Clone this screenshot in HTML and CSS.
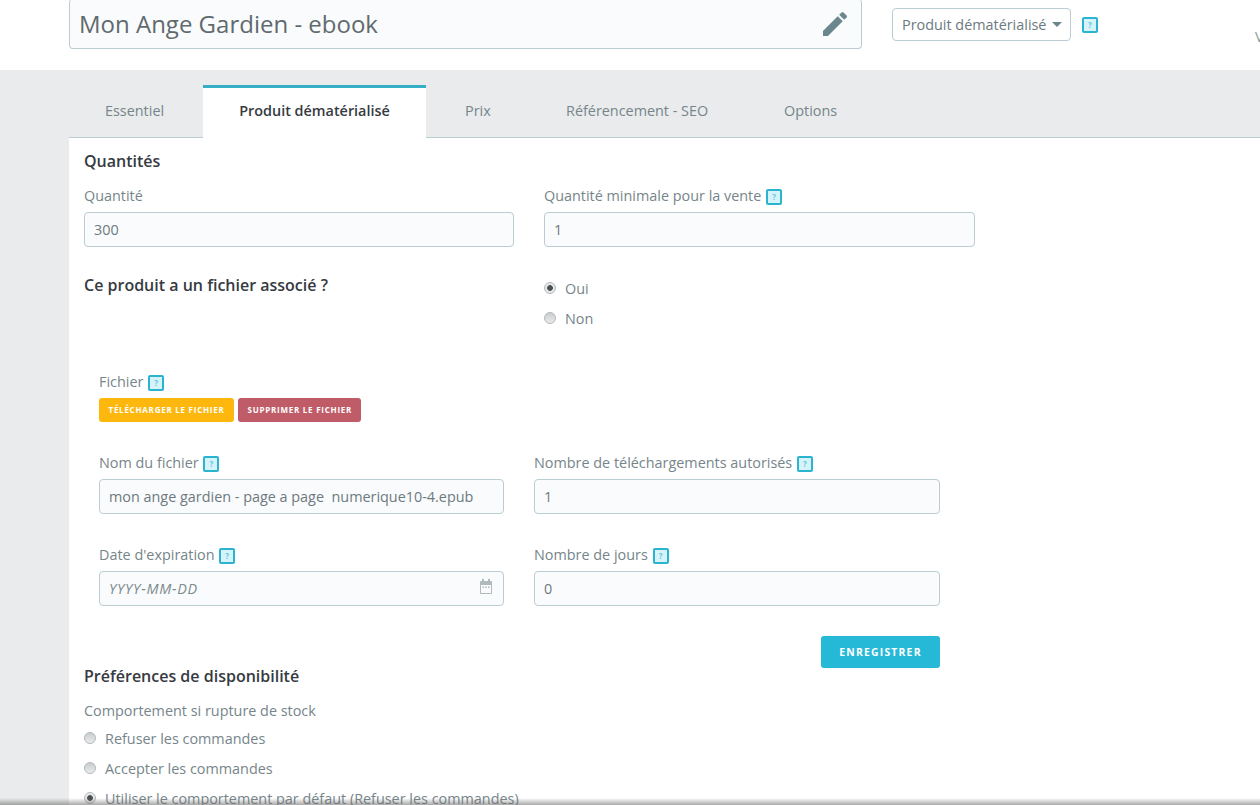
FILE: index.html
```html
<!DOCTYPE html>
<html lang="fr">
<head>
<meta charset="utf-8">
<title>Mon Ange Gardien - ebook</title>
<link rel="stylesheet" href="styles.css">
</head>
<body>
<header class="top">
  <div class="title-box">
    <span class="title-text">Mon Ange Gardien - ebook</span>
    <svg class="pencil" viewBox="0 0 24 24" width="32" height="32"><path d="M3 17.25V21h3.75L17.81 9.94l-3.75-3.75L3 17.25zM20.71 7.04a1 1 0 0 0 0-1.41l-2.34-2.34a1 1 0 0 0-1.41 0l-1.83 1.83 3.75 3.75 1.83-1.83z"/></svg>
  </div>
  <div class="type-select">Produit dématérialisé<span class="caret"></span></div>
  <span class="help help-top">?</span>
  <span class="cut-v">V</span>
</header>
<main class="page">
  <nav class="tabs">
    <a class="tab tab-1">Essentiel</a>
    <a class="tab tab-active">Produit dématérialisé</a>
    <a class="tab tab-3">Prix</a>
    <a class="tab tab-4">Référencement - SEO</a>
    <a class="tab tab-5">Options</a>
  </nav>
  <section class="content">
    <h2 class="heading h-qty">Quantités</h2>
    <div class="row row-main first">
      <div class="field"><label class="lab">Quantité</label><div class="input">300</div></div>
      <div class="field"><label class="lab">Quantité minimale pour la vente <span class="help">?</span></label><div class="input">1</div></div>
    </div>
    <div class="row row-main assoc">
      <h2 class="heading h-assoc">Ce produit a un fichier associé ?</h2>
      <div class="radios">
        <div class="radio-line"><span class="radio on"></span>Oui</div>
        <div class="radio-line"><span class="radio"></span>Non</div>
      </div>
    </div>
    <div class="file-block">
      <div class="lab lab-file">Fichier <span class="help">?</span></div>
      <div class="btns">
        <a class="btn-small yellow">Télécharger le fichier</a>
        <a class="btn-small red">Supprimer le fichier</a>
      </div>
      <div class="row row-sub">
        <div class="field"><label class="lab">Nom du fichier <span class="help">?</span></label><div class="input">mon ange gardien - page a page&nbsp; numerique10-4.epub</div></div>
        <div class="field"><label class="lab">Nombre de téléchargements autorisés <span class="help">?</span></label><div class="input">1</div></div>
      </div>
      <div class="row row-sub">
        <div class="field"><label class="lab">Date d'expiration <span class="help">?</span></label>
          <div class="input date"><em>YYYY-MM-DD</em>
            <svg class="cal" viewBox="0 0 12 15" width="12" height="15"><path d="M2 0h2v2h4V0h2v2h1a1 1 0 0 1 1 1v11a1 1 0 0 1-1 1H1a1 1 0 0 1-1-1V3a1 1 0 0 1 1-1h1V0zM1 6v8h10V6H1zm1.5 1.5h1.5V9H2.500zm2.750 0h1.500V9h-1.500zm2.750 0h1.500V9H8z"/></svg>
          </div></div>
        <div class="field"><label class="lab">Nombre de jours <span class="help">?</span></label><div class="input">0</div></div>
      </div>
      <div class="save-line"><a class="btn-save">Enregistrer</a></div>
    </div>
    <h2 class="heading h-pref">Préférences de disponibilité</h2>
    <div class="lab lab-stock">Comportement si rupture de stock</div>
    <div class="radio-line"><span class="radio"></span>Refuser les commandes</div>
    <div class="radio-line"><span class="radio"></span>Accepter les commandes</div>
    <div class="radio-line"><span class="radio on"></span>Utiliser le comportement par défaut (Refuser les commandes)</div>
  </section>
</main>
<div class="bottom-shade"></div>
</body>
</html>
```
FILE: styles.css
```css
* { box-sizing: border-box; }
html, body { margin: 0; height: 805px; overflow: hidden; }
body { font-family: "Open Sans", sans-serif; font-size: 14.4px; color: #76858a; background: #fff; position: relative; }
.top { height: 70px; display: flex; align-items: flex-start; padding-left: 69px; position: relative; }
.title-box { width: 793px; height: 50px; margin-top: -1px; border: 1px solid #bbcdd2; border-top: 0; border-radius: 4px; background: #fafbfc; display: flex; align-items: center; justify-content: space-between; padding: 0 10px 0 9px; }
.title-text { font-size: 24px; color: #5f6a6e; line-height: 49px; }
.pencil { fill: #6c868e; }
.type-select { margin: 8px 0 0 30px; width: 179px; height: 33px; border: 1px solid #bbcdd2; border-radius: 4px; padding-left: 9px; line-height: 31px; color: #6c7a80; background: #fff; white-space: nowrap; }
.caret { display: inline-block; margin-left: 6px; vertical-align: 3px; border: 5px solid transparent; border-top-color: #6c868e; border-bottom: 0; }
.help { display: inline-flex; align-items: center; justify-content: center; width: 16px; height: 16px; border: 2px solid #2bb4cf; border-radius: 2px; background: #d6f3f9; color: #5fc9de; font-size: 8px; font-weight: 700; line-height: 1; vertical-align: 1px; margin-left: 1px; }
.help-top { margin: 17px 0 0 11px; }
.cut-v { position: absolute; left: 1255px; top: 27px; color: #8a9ba0; }
.page { background: #e9ebec; height: 735px; padding-left: 69px; }
.tabs { height: 68px; padding-top: 15px; display: flex; border-bottom: 1px solid #bbcdd2; align-items: stretch; }
.tab { color: #76858a; line-height: 50px; padding-top: 1px; }
.tab-1 { margin-left: 36px; width: 98px; }
.tab-active { width: 223px; height: 53px; padding-top: 0; border-top: 3px solid #36afc6; background: #fff; color: #363a41; font-weight: 600; text-align: center; line-height: 46px; }
.tab-3 { margin-left: 39px; width: 101px; }
.tab-4 { width: 218px; }
.content { background: #fff; height: 667px; padding: 12px 0 0 15px; }
.heading { margin: 0; font-size: 16px; font-weight: 600; color: #363a41; line-height: 22px; }
.row { display: flex; }
.row-main { gap: 30px; }
.row-main .field { width: 430px; }
.row-main .field:last-child { width: 431px; }
.row-sub { gap: 30px; margin-top: 31px; }
.row-sub .field { width: 405px; }
.row-sub .field:last-child { width: 406px; }
.lab { display: block; height: 20px; line-height: 20px; color: #76858a; white-space: nowrap; }
.input { height: 35px; margin-top: 6px; border: 1px solid #bbcdd2; border-radius: 4px; background: #fafbfc; padding-left: 9px; line-height: 33px; color: #6c7a80; white-space: nowrap; }
.first { margin-top: 14px; }
.assoc { margin-top: 27px; height: 90px; }
.h-assoc { width: 430px; }
.radio-line { height: 30px; line-height: 30px; display: flex; align-items: center; color: #76858a; white-space: nowrap; }
.radio { width: 12px; height: 12px; border-radius: 50%; margin: -3px 9px 0 0; background: linear-gradient(#c9cdcf, #e9ebec); border: 1px solid #b4b8ba; flex: none; }
.radio.on { background: radial-gradient(circle, #4a4f52 0 2.5px, #e6e8e9 3.2px); }
.file-block { margin-left: 15px; width: 841px; margin-top: 8px; }
.btns { display: flex; gap: 4px; margin-top: 6px; }
.btn-small { height: 24px; padding-left: 9.500px; border-radius: 3px; color: #fff; font-size: 8px; font-weight: 700; text-transform: uppercase; letter-spacing: .75px; line-height: 24px; white-space: nowrap; }
.yellow { background: #fdb70d; width: 135px; }
.red { background: #c05c67; width: 123px; }
.date { display: flex; justify-content: space-between; align-items: center; padding-right: 11px; }
.date em { color: #7c8b90; letter-spacing: .75px; }
.cal { fill: #b0b9bc; margin-top: -5px; }
.save-line { display: flex; justify-content: flex-end; margin-top: 30px; }
.btn-save { width: 119px; height: 32px; background: #25b9d7; border-radius: 3px; color: #fff; font-size: 10.4px; font-weight: 700; letter-spacing: 1.2px; text-transform: uppercase; text-align: center; line-height: 32px; }
.h-pref { margin-top: -3px; }
.lab-stock { margin-top: 14px; margin-bottom: 3px; }
.bottom-shade { position: absolute; left: 0; right: 0; bottom: 0; height: 7px; background: linear-gradient(rgba(110,110,110,0), rgba(110,110,110,.6)); }
```
